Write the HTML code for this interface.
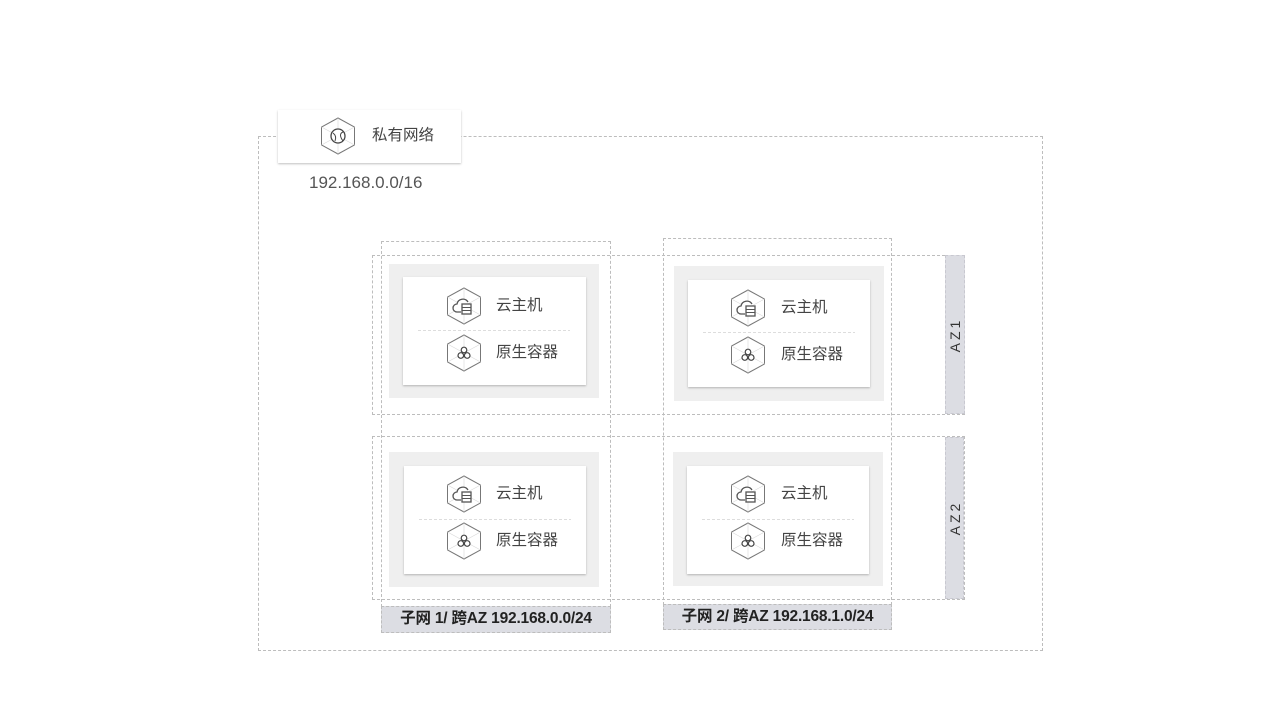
<!DOCTYPE html>
<html><head><meta charset="utf-8"><style>
*{margin:0;padding:0;box-sizing:border-box}
body{width:1280px;height:720px;background:#fff;position:relative;overflow:hidden;font-family:"Liberation Sans","Noto Sans CJK SC",sans-serif;color:#444}
.a{position:absolute}
.d{border:1px dashed #bdbdbd}
.g{background:#efefef}
.w{background:#fff;box-shadow:0 1px 2px rgba(0,0,0,.25)}
.t{font-size:15.5px;color:#444;white-space:nowrap;line-height:18px}
.lab{background:#dcdde3;font-weight:bold;font-size:15.5px;color:#222;text-align:center;line-height:24px;white-space:nowrap;letter-spacing:-.2px}
.az{background:#dcdde3;border:1px dashed #c8c8d0}
.az span{position:absolute;left:50%;top:50%;transform:translate(-50%,-50%) rotate(-90deg);font-size:14px;letter-spacing:3px;color:#333}
</style></head><body>
<svg width="0" height="0" style="position:absolute"><defs>
<g id="hex"><polygon points="0,-18 16.5,-9 16.5,9 0,18 -16.5,9 -16.5,-9" fill="none" stroke="#777" stroke-width="1"/><path d="M0,-18V18M-16.5,-9L16.5,9M16.5,-9L-16.5,9" stroke="#d8d8d8" stroke-width=".6"/></g>
<g id="vm"><use href="#hex"/><path d="M-3,6H-7a4,4 0 0 1 0-8a6,6 0 0 1 11-2" fill="#fff" stroke="#555" stroke-width="1.3"/><rect x="-2" y="-2" width="9" height="10" fill="#fff" stroke="#555" stroke-width="1.3"/><path d="M-2,1.5H7M-2,4.5H7" stroke="#555"/></g>
<g id="ct"><use href="#hex"/><circle cx="0" cy="-3" r="2.8" fill="#fff" stroke="#444" stroke-width="1.2"/><circle cx="-3.2" cy="2.5" r="2.8" fill="#fff" stroke="#444" stroke-width="1.2"/><circle cx="3.2" cy="2.5" r="2.8" fill="#fff" stroke="#444" stroke-width="1.2"/></g>
<g id="vpc"><use href="#hex"/><circle cx="0" cy="0" r="7" fill="#fff" stroke="#444" stroke-width="1.3"/><path d="M-5,-3q4,3 2,8M5,-4q-5,2 0,9" fill="none" stroke="#444"/></g>
</defs></svg>

<div class="a d" style="left:258px;top:136px;width:785px;height:515px"></div>
<div class="a w" style="left:278px;top:110px;width:183px;height:53px"></div>
<svg class="a" style="left:318px;top:116px" width="40" height="40"><use href="#vpc" x="20" y="20"/></svg>
<div class="a t" style="left:372px;top:127px">私有网络</div>
<div class="a" style="left:309px;top:173px;font-size:17px;color:#555">192.168.0.0/16</div>

<div class="a d" style="left:381px;top:241px;width:230px;height:366px"></div>
<div class="a d" style="left:663px;top:238px;width:229px;height:367px"></div>
<div class="a d" style="left:372px;top:255px;width:593px;height:160px"></div>
<div class="a d" style="left:372px;top:436px;width:593px;height:164px"></div>
<div class="a az" style="left:945px;top:255px;width:20px;height:159px"><span>AZ1</span></div>
<div class="a az" style="left:945px;top:437px;width:19px;height:162px"><span>AZ2</span></div>
<div class="a lab d" style="left:381px;top:606px;width:230px;height:27px">子网 1/ 跨AZ 192.168.0.0/24</div>
<div class="a lab d" style="left:663px;top:604px;width:229px;height:26px">子网 2/ 跨AZ 192.168.1.0/24</div>

<div class="a g" style="left:389px;top:264px;width:210px;height:134px"></div>
<div class="a w" style="left:403px;top:277px;width:183px;height:108px"></div>
<div class="a g" style="left:674px;top:266px;width:210px;height:135px"></div>
<div class="a w" style="left:688px;top:280px;width:182px;height:107px"></div>
<div class="a g" style="left:389px;top:452px;width:210px;height:135px"></div>
<div class="a w" style="left:404px;top:466px;width:182px;height:108px"></div>
<div class="a g" style="left:673px;top:452px;width:210px;height:134px"></div>
<div class="a w" style="left:687px;top:466px;width:182px;height:108px"></div>

<svg class="a" style="left:0;top:0" width="1280" height="720">
<g stroke="#ddd" stroke-dasharray="3 2"><path d="M418,330.5H570M703,332.5H855M419,519.5H571M702,519.5H854"/></g>
<use href="#vm" x="464" y="306"/><use href="#ct" x="464" y="353"/>
<use href="#vm" x="748" y="308"/><use href="#ct" x="748" y="355"/>
<use href="#vm" x="464" y="494"/><use href="#ct" x="464" y="541"/>
<use href="#vm" x="748" y="494"/><use href="#ct" x="748" y="541"/>
</svg>
<div class="a t" style="left:496px;top:297px">云主机</div>
<div class="a t" style="left:496px;top:344px">原生容器</div>
<div class="a t" style="left:781px;top:299px">云主机</div>
<div class="a t" style="left:781px;top:346px">原生容器</div>
<div class="a t" style="left:496px;top:485px">云主机</div>
<div class="a t" style="left:496px;top:532px">原生容器</div>
<div class="a t" style="left:781px;top:485px">云主机</div>
<div class="a t" style="left:781px;top:532px">原生容器</div>
</body></html>
